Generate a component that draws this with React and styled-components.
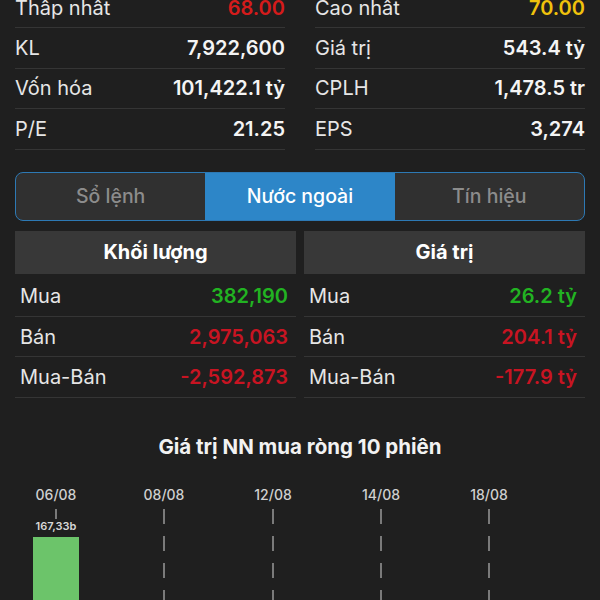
import styled, { createGlobalStyle } from "styled-components";

const GlobalStyle = createGlobalStyle`
  html, body {
    margin: 0;
    padding: 0;
    background: #1f1f1f;
    overflow: hidden;
  }
  body {
    font-family: Inter, "Noto Sans", "Liberation Sans", sans-serif;
    color: #ececec;
  }
`

const Page = styled.div`
  width: 600px;
  height: 600px;
  overflow: hidden;
  background: #1f1f1f;
`

const Content = styled.div`
  padding: 0 15px;
`

const StatsGrid = styled.div`
  display: grid;
  grid-template-columns: 1fr 1fr;
  column-gap: 30px;
  margin-top: -12px;
`

const StatRow = styled.div`
  display: flex;
  align-items: center;
  justify-content: space-between;
  height: 40.4px;
  box-sizing: border-box;
  border-bottom: 1px solid #353535;
  font-size: 20px;
`

const Label = styled.span`
  color: #e6e6e6;
  font-weight: 400;
`

const Value = styled.span`
  color: ${p => p.$color || "#f4f4f4"};
  font-weight: 600;
`

const Segmented = styled.div`
  display: grid;
  grid-template-columns: repeat(3, 1fr);
  margin-top: 22px;
  height: 49px;
  box-sizing: border-box;
  border: 1.5px solid #2d79b4;
  border-radius: 8px;
  overflow: hidden;
  background: #303030;
`

const Segment = styled.div`
  display: flex;
  align-items: center;
  justify-content: center;
  font-size: 19.5px;
  font-weight: 500;
  color: ${p => (p.$active ? "#ffffff" : "#8c8c8c")};
  background: ${p => (p.$active ? "#2d86c8" : "transparent")};
`

const Tables = styled.div`
  display: grid;
  grid-template-columns: 281px 281px;
  column-gap: 8px;
  margin-top: 10px;
`

const Table = styled.div`
  display: flex;
  flex-direction: column;
`

const TableHead = styled.div`
  height: 43px;
  display: flex;
  align-items: center;
  justify-content: center;
  background: #383838;
  color: #ffffff;
  font-size: 20px;
  font-weight: 700;
  margin-bottom: 3px;
`

const FlowRow = styled(StatRow)`
  padding: 0 8px 0 5px;
`

const ChartTitle = styled.div`
  margin-top: 37px;
  height: 24px;
  line-height: 24px;
  text-align: center;
  font-size: 20.5px;
  font-weight: 700;
  color: #f2f2f2;
`

const ChartSvg = styled.svg`
  display: block;
  width: 600px;
  height: 150px;
`

const topStats = [
  [["Thấp nhất", "68.00", "#d51b1b"], ["Cao nhất", "70.00", "#f0c20c"]],
  [["KL", "7,922,600"], ["Giá trị", "543.4 tỷ"]],
  [["Vốn hóa", "101,422.1 tỷ"], ["CPLH", "1,478.5 tr"]],
  [["P/E", "21.25"], ["EPS", "3,274"]],
]

const GREEN = "#22b322"
const RED = "#c81422"

const volume = [
  ["Mua", "382,190", GREEN],
  ["Bán", "2,975,063", RED],
  ["Mua-Bán", "-2,592,873", RED],
]

const value = [
  ["Mua", "26.2 tỷ", GREEN],
  ["Bán", "204.1 tỷ", RED],
  ["Mua-Bán", "-177.9 tỷ", RED],
]

const dates = [
  ["06/08", 56],
  ["08/08", 164],
  ["12/08", 273],
  ["14/08", 381],
  ["18/08", 489],
]

function FlowTable({ title, rows }) {
  return (
    <Table>
      <TableHead>{title}</TableHead>
      {rows.map(([l, v, c]) => (
        <FlowRow key={l}>
          <Label>{l}</Label>
          <Value $color={c}>{v}</Value>
        </FlowRow>
      ))}
    </Table>
  )
}

function Chart() {
  return (
    <ChartSvg viewBox="0 0 600 150">
      {dates.map(([d, x], i) => (
        <g key={d}>
          <text x={x} y={41} textAnchor="middle" fontSize="14" fill="#d0d0d0"
            fontFamily="Inter, 'Liberation Sans', sans-serif" fontWeight="500">{d}</text>
          <line x1={x} x2={x} y1={50} y2={i === 0 ? 60 : 150} stroke="#7a7a7a"
            strokeWidth="2" strokeDasharray="15 12" />
        </g>
      ))}
      <text x={56} y={71} textAnchor="middle" fontSize="11" fill="#d8d8d8"
        fontFamily="Inter, 'Liberation Sans', sans-serif" fontWeight="600">167,33b</text>
      <rect x={33} y={78} width={46} height={80} fill="#6cc46a" />
    </ChartSvg>
  )
}

export default function App() {
  return (
    <Page>
      <GlobalStyle />
      <Content>
        <StatsGrid>
          {topStats.map(pair =>
            pair.map(([l, v, c]) => (
              <StatRow key={l}>
                <Label>{l}</Label>
                <Value $color={c}>{v}</Value>
              </StatRow>
            ))
          )}
        </StatsGrid>
        <Segmented>
          <Segment>Sổ lệnh</Segment>
          <Segment $active>Nước ngoài</Segment>
          <Segment>Tín hiệu</Segment>
        </Segmented>
        <Tables>
          <FlowTable title="Khối lượng" rows={volume} />
          <FlowTable title="Giá trị" rows={value} />
        </Tables>
        <ChartTitle>Giá trị NN mua ròng 10 phiên</ChartTitle>
      </Content>
      <Chart />
    </Page>
  )
}
